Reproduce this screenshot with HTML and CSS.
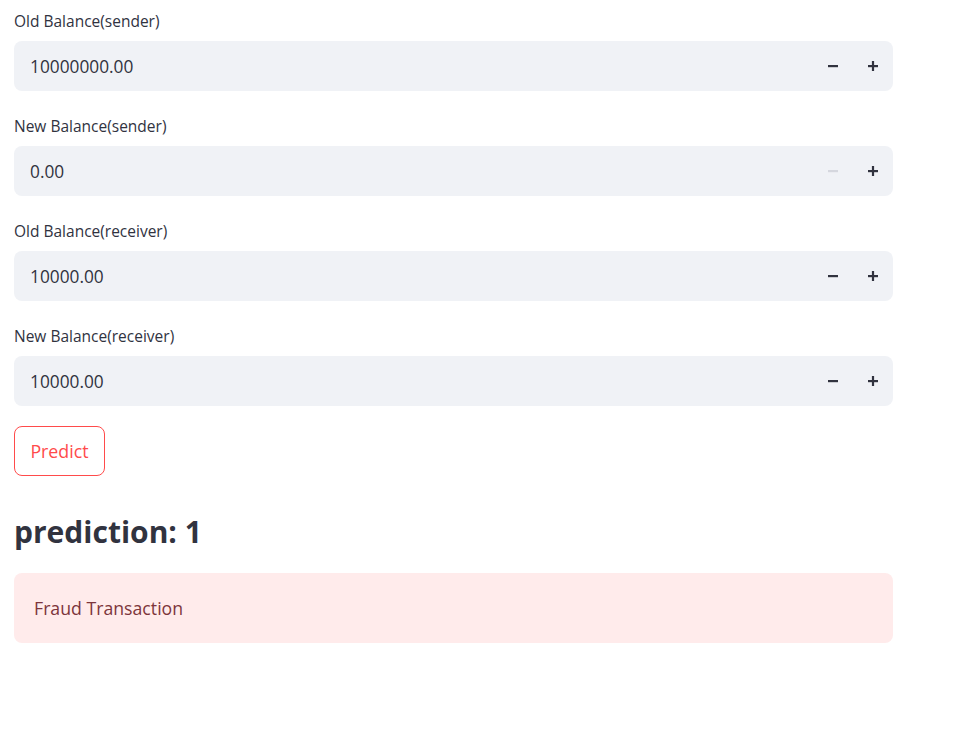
FILE: index.html
```html
<!DOCTYPE html>
<html>
<head>
<meta charset="utf-8">
<link rel="stylesheet" href="styles.css">
</head>
<body>
<main class="app">
  <div class="field">
    <label class="label">Old Balance(sender)</label>
    <div class="input">
      <span class="value">10000000.00</span>
      <div class="steps">
        <span class="step"><svg width="12" height="12" viewBox="0 0 12 12"><rect x="1" y="5" width="10" height="2.2" fill="currentColor"/></svg></span>
        <span class="step"><svg width="12" height="12" viewBox="0 0 12 12"><rect x="1" y="5" width="10" height="2.2" fill="currentColor"/><rect x="4.9" y="1" width="2.2" height="10" fill="currentColor"/></svg></span>
      </div>
    </div>
  </div>
  <div class="field">
    <label class="label">New Balance(sender)</label>
    <div class="input">
      <span class="value">0.00</span>
      <div class="steps">
        <span class="step disabled"><svg width="12" height="12" viewBox="0 0 12 12"><rect x="1" y="5" width="10" height="2.2" fill="currentColor"/></svg></span>
        <span class="step"><svg width="12" height="12" viewBox="0 0 12 12"><rect x="1" y="5" width="10" height="2.2" fill="currentColor"/><rect x="4.9" y="1" width="2.2" height="10" fill="currentColor"/></svg></span>
      </div>
    </div>
  </div>
  <div class="field">
    <label class="label">Old Balance(receiver)</label>
    <div class="input">
      <span class="value">10000.00</span>
      <div class="steps">
        <span class="step"><svg width="12" height="12" viewBox="0 0 12 12"><rect x="1" y="5" width="10" height="2.2" fill="currentColor"/></svg></span>
        <span class="step"><svg width="12" height="12" viewBox="0 0 12 12"><rect x="1" y="5" width="10" height="2.2" fill="currentColor"/><rect x="4.9" y="1" width="2.2" height="10" fill="currentColor"/></svg></span>
      </div>
    </div>
  </div>
  <div class="field">
    <label class="label">New Balance(receiver)</label>
    <div class="input">
      <span class="value">10000.00</span>
      <div class="steps">
        <span class="step"><svg width="12" height="12" viewBox="0 0 12 12"><rect x="1" y="5" width="10" height="2.2" fill="currentColor"/></svg></span>
        <span class="step"><svg width="12" height="12" viewBox="0 0 12 12"><rect x="1" y="5" width="10" height="2.2" fill="currentColor"/><rect x="4.9" y="1" width="2.2" height="10" fill="currentColor"/></svg></span>
      </div>
    </div>
  </div>
  <button class="btn">Predict</button>
  <h2 class="heading">prediction: 1</h2>
  <div class="alert">Fraud Transaction</div>
</main>
</body>
</html>
```
FILE: styles.css
```css
html, body {
  margin: 0;
  padding: 0;
  background: #ffffff;
}
body {
  font-family: "Open Sans", "Noto Sans", sans-serif;
  color: #31333f;
}
.app {
  width: 879px;
  padding: 11px 0 0 14px;
  display: flex;
  flex-direction: column;
}
.field {
  display: flex;
  flex-direction: column;
  margin-bottom: 25px;
}
.label {
  font-size: 15.5px;
  line-height: 20px;
  height: 20px;
  margin-bottom: 10px;
  color: #31333f;
}
.input {
  height: 50px;
  background: #f0f2f6;
  border-radius: 8px;
  display: flex;
  align-items: center;
  justify-content: space-between;
  padding-left: 16px;
  box-sizing: border-box;
}
.value {
  font-size: 17.3px;
  color: #31333f;
}
.steps {
  display: flex;
  height: 100%;
}
.step {
  width: 40px;
  height: 100%;
  display: flex;
  align-items: center;
  justify-content: center;
  color: #31333f;
}
.step.disabled {
  color: #d5d7de;
}
.btn {
  align-self: flex-start;
  margin-top: -5px;
  width: 91px;
  height: 50px;
  border: 1px solid #ff4b4b;
  border-radius: 8px;
  background: #ffffff;
  color: #ff4b4b;
  font-family: inherit;
  font-size: 17.8px;
  padding: 0;
}
.heading {
  margin: 30px 0 0 0;
  font-size: 30px;
  line-height: 52px;
  font-weight: 700;
  color: #31333f;
}
.alert {
  margin-top: 15px;
  height: 70px;
  box-sizing: border-box;
  padding: 0 20px;
  display: flex;
  align-items: center;
  background: #ffebeb;
  border-radius: 8px;
  color: #7d353b;
  font-size: 17.7px;
}
```
